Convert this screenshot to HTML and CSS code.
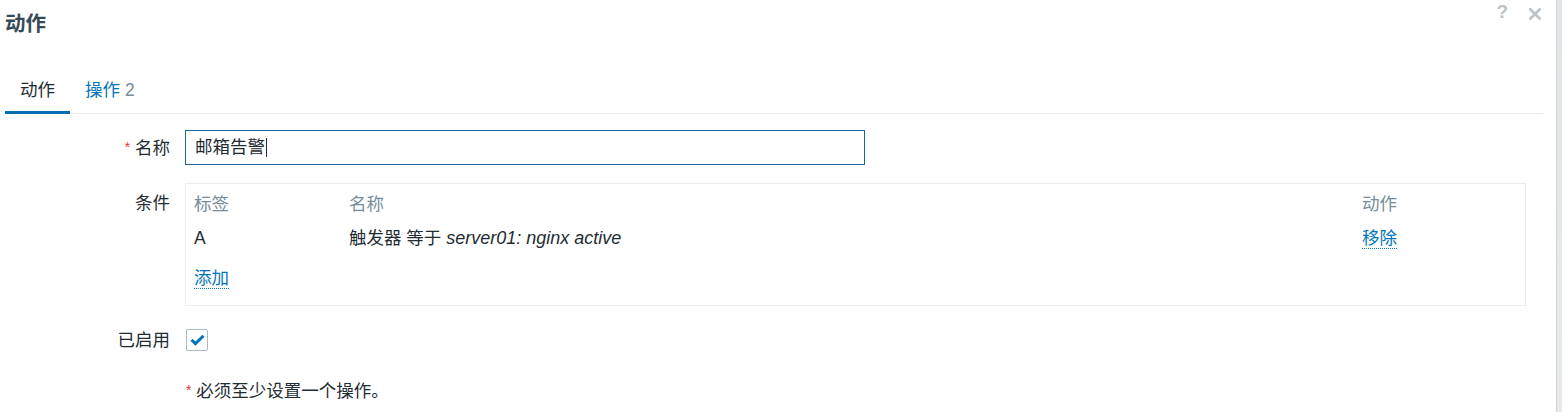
FILE: index.html
```html
<!DOCTYPE html>
<html lang="zh-CN">
<head>
  <meta charset="UTF-8" />
  <title>动作</title>
  <link rel="stylesheet" href="styles.css">
</head>
<body>
  <div class="modal">
    <div class="modal-head">
      <h1>动作</h1>
      <div class="head-btns">
        <span class="btn-help">?</span>
        <span class="btn-close">
          <svg width="14" height="14" viewBox="0 0 14 14"><path d="M1.5 1.5 L12.5 12.5 M12.5 1.5 L1.5 12.5" stroke="#b9c3c8" stroke-width="2.6"/></svg>
        </span>
      </div>
    </div>

    <ul class="tabs">
      <li class="tab active">动作</li>
      <li class="tab">操作 <span class="count">2</span></li>
    </ul>

    <div class="form">
      <label class="form-label"><span class="req">*</span> 名称</label>
      <div class="form-field">
        <div class="input">邮箱告警<span class="caret"></span></div>
      </div>

      <label class="form-label label-top">条件</label>
      <div class="form-field">
        <div class="conditions">
          <div class="cond-row cond-head">
            <span>标签</span><span>名称</span><span>动作</span>
          </div>
          <div class="cond-row">
            <span>A</span>
            <span>触发器 等于 <em>server01: nginx active</em></span>
            <span><a class="link">移除</a></span>
          </div>
          <div class="cond-add"><a class="link">添加</a></div>
        </div>
      </div>

      <label class="form-label">已启用</label>
      <div class="form-field">
        <span class="checkbox">
          <svg width="15" height="12" viewBox="0 0 15 12"><path d="M1.5 5.8 L5.5 9.6 L13.5 1.8" fill="none" stroke="#0275b8" stroke-width="3"/></svg>
        </span>
      </div>

      <div></div>
      <div class="form-note"><span class="req">*</span> 必须至少设置一个操作。</div>
    </div>
  </div>
  <div class="backdrop-edge"></div>
</body>
</html>
```

FILE: styles.css
```css
* {
  box-sizing: border-box;
}
body {
  margin: 0;
  height: 412px;
  overflow: hidden;
  display: flex;
  font-family: "Liberation Sans", "Noto Sans CJK SC", sans-serif;
  font-size: 17.5px;
  color: #1f2c33;
  background: #fff;
}
.modal {
  flex: 1;
  padding: 0 16px 0 5px;
}

/* Cabecera */
.modal-head {
  display: flex;
  justify-content: space-between;
  height: 60px;
}
h1 {
  margin: 10px 0 0;
  font-size: 20.5px;
  font-weight: bold;
  color: #384a56;
  line-height: 28px;
}
.head-btns {
  display: flex;
  gap: 20px;
  align-items: flex-start;
  padding-top: 2px;
  margin-right: -2px;
}
.btn-help {
  color: #b9c3c8;
  font-size: 19px;
  font-weight: bold;
  line-height: 20px;
}
.btn-close {
  padding-top: 3px;
}

/* Pestañas */
.tabs {
  display: flex;
  list-style: none;
  margin: 0;
  padding: 0;
  border-bottom: 1px solid #ebeef0;
  margin-right: -3px;
}
.tab {
  padding: 19px 15px 10px;
  line-height: 22px;
  color: #0275b8;
  border-bottom: 3px solid transparent;
  margin-bottom: -1px;
}
.tab.active {
  color: #1f2c33;
  border-bottom-color: #0a6db0;
}
.count {
  color: #768d99;
}

/* Formulario */
.form {
  display: grid;
  grid-template-columns: 165px 1fr;
  column-gap: 15px;
  row-gap: 17px;
  margin-top: 16px;
}
.form-label {
  text-align: right;
  line-height: 35px;
}
.label-top {
  line-height: 40px;
}
.req {
  color: #e33734;
  font-size: 14px;
  vertical-align: 2px;
}
.input {
  width: 680px;
  height: 35px;
  border: 1px solid #1d65a0;
  padding: 0 9px;
  line-height: 33px;
  display: flex;
  align-items: center;
}
.caret {
  display: inline-block;
  width: 1px;
  height: 19px;
  background: #1f2c33;
  margin-left: 1px;
}

.conditions {
  width: 1341px;
  border: 1px solid #ebeef0;
  padding: 3px 0 10px 8px;
}
.cond-row {
  display: grid;
  grid-template-columns: 155px 1013px auto;
  line-height: 34px;
}
.cond-head {
  color: #768d99;
}
.cond-add {
  line-height: 34px;
  margin-top: 6px;
}
.link {
  color: #0275b8;
  border-bottom: 1px dotted #0275b8;
  line-height: 20px;
  display: inline-block;
}
em {
  font-style: italic;
  font-size: 18px;
}

.checkbox {
  display: inline-flex;
  align-items: center;
  justify-content: center;
  width: 22px;
  height: 22px;
  margin: 6px 0 0 1px;
  border: 1px solid #acbbc2;
  border-radius: 2px;
}
.form-note {
  margin-top: 3px;
  padding-left: 1px;
  line-height: 24px;
}

/* Borde de la página de fondo */
.backdrop-edge {
  width: 6px;
  background: linear-gradient(#dfe5e8, #e6eaec);
  border-left: 1px solid #cdd4d8;
}
```
